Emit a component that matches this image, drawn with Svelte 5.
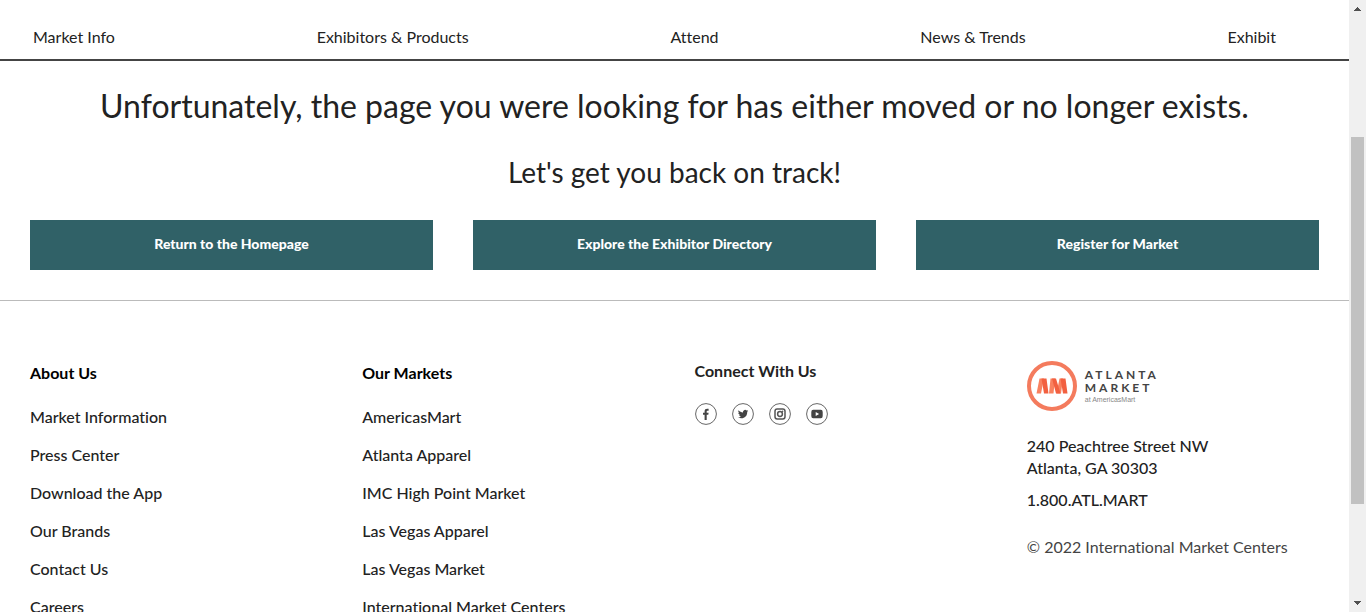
<script>
  const nav = ['Market Info', 'Exhibitors & Products', 'Attend', 'News & Trends', 'Exhibit'];
  const actions = ['Return to the Homepage', 'Explore the Exhibitor Directory', 'Register for Market'];
  const groups = [
    {
      title: 'About Us',
      links: ['Market Information', 'Press Center', 'Download the App', 'Our Brands', 'Contact Us', 'Careers']
    },
    {
      title: 'Our Markets',
      links: ['AmericasMart', 'Atlanta Apparel', 'IMC High Point Market', 'Las Vegas Apparel', 'Las Vegas Market', 'International Market Centers']
    }
  ];
</script>

<div class="window">
  <div class="page">
    <header>
      <nav>
        {#each nav as item}
          <a href="#top">{item}</a>
        {/each}
      </nav>
    </header>

    <main>
      <h1>Unfortunately, the page you were looking for has either moved or no longer exists.</h1>
      <h2>Let's get you back on track!</h2>
      <div class="actions">
        {#each actions as action}
          <a href="#top">{action}</a>
        {/each}
      </div>
    </main>

    <footer>
      {#each groups as group}
        <section class="group">
          <h3>{group.title}</h3>
          <ul>
            {#each group.links as link}
              <li><a href="#top">{link}</a></li>
            {/each}
          </ul>
        </section>
      {/each}

      <section class="connect">
        <h3>Connect With Us</h3>
        <div class="social">
          <a href="#top" aria-label="Facebook">
            <svg viewBox="0 0 22 22"><circle cx="11" cy="11" r="10.4" /><path d="M9.600 17v-5.200H8V9.700h1.600V8.300c0-1.700 1-2.500 2.500-2.500h1.500v1.900h-1c-.7 0-.9.3-.9.9v1.100h1.900l-.3 2.100h-1.600V17z" /></svg>
          </a>
          <a href="#top" aria-label="Twitter">
            <svg viewBox="0 0 22 22"><circle cx="11" cy="11" r="10.4" /><path d="M16.200 7.900c-.4.2-.8.3-1.200.4.4-.3.8-.7.9-1.200-.4.2-.9.4-1.300.5a2.100 2.100 0 0 0-3.600 1.900c-1.800-.1-3.300-.9-4.400-2.200-.6 1-.2 2.200.7 2.800-.4 0-.7-.1-1-.3 0 1 .7 1.900 1.700 2.100-.3.1-.6.1-.9 0 .3.900 1.100 1.500 2 1.500-.9.700-2 1-3.100.9 4.400 2.700 9.400-.2 9.200-5.300.4-.3.700-.7 1-1.100z" /></svg>
          </a>
          <a href="#top" aria-label="Instagram">
            <svg viewBox="0 0 22 22"><circle cx="11" cy="11" r="10.4" /><rect class="line" x="6" y="6" width="10" height="10" rx="2.200" /><circle class="line" cx="11" cy="11" r="2.400" /><circle class="dot" cx="13.700" cy="8.300" r=".7" /></svg>
          </a>
          <a href="#top" aria-label="YouTube">
            <svg viewBox="0 0 22 22"><circle cx="11" cy="11" r="10.4" /><path fill-rule="evenodd" d="M7.200 6.800h7.600q1.900 0 1.900 2.200v4q0 2.200-1.900 2.200H7.200q-1.900 0-1.900-2.200V9q0-2.200 1.900-2.200zM9.700 9v4l3.400-2z" /></svg>
          </a>
        </div>
      </section>

      <section class="contact">
        <a class="logo" href="#top">
          <svg viewBox="0 0 50 50" aria-hidden="true">
            <circle cx="25" cy="25" r="23" fill="none" stroke="#f47b5d" stroke-width="4" />
            <path fill="#f9815f" d="M9.500 32.500 12.500 17.500H17L14 32.500zM22 32.500 23.500 17.500H28L26.500 32.500zM29.500 32.500 32.500 17.500H36L34 32.500z" />
            <path fill="#f26040" d="M14.500 17.500H19.500L21.500 32.500H17zM25 17.500H29L33.500 32.500H29zM33.500 17.500H38.500L40.500 32.500H36z" />
          </svg>
          <span class="wordmark">
            <span>ATLANTA</span>
            <span>MARKET</span>
            <small>at AmericasMart</small>
          </span>
        </a>
        <address>240 Peachtree Street NW<br />Atlanta, GA 30303</address>
        <a class="phone" href="#top">1.800.ATL.MART</a>
        <p>© 2022 International Market Centers</p>
      </section>
    </footer>
  </div>

  <div class="scrollbar" aria-hidden="true">
    <svg viewBox="0 0 17 17"><path d="M5 11h7v-1h-1V9h-1V8H9V7H8v1H7v1H6v1H5z" /></svg>
    <div class="track"><div class="thumb"></div></div>
    <svg viewBox="0 0 17 17"><path d="M5 6h7v1h-1v1h-1v1H9v1H8V9H7V8H6V7H5z" /></svg>
  </div>
</div>

<style>
  :global(body) {
    margin: 0;
    background: #fff;
  }
  .window {
    display: grid;
    grid-template-columns: minmax(0, 1fr) 17px;
    height: 100vh;
    overflow: hidden;
    font-family: Lato, 'Open Sans', sans-serif;
    font-size: 16px;
    font-variant-ligatures: none;
    line-height: 22px;
    color: #222;
  }
  .page {
    height: 100vh;
    overflow: hidden;
  }
  a {
    color: inherit;
    text-decoration: none;
  }
  h1, h2, h3, ul, p {
    margin: 0;
    padding: 0;
  }
  header {
    border-bottom: 2px solid #444;
  }
  nav {
    display: flex;
    justify-content: space-between;
    padding: 26px 73px 11px 33px;
  }
  main {
    padding: 23px 30px 30px;
    text-align: center;
    border-bottom: 1px solid #bbb;
  }
  h1, h2 {
    font-weight: 400;
  }
  h1 {
    font-size: 32px;
    line-height: 44px;
  }
  h2 {
    margin-top: 26px;
    font-size: 28px;
    line-height: 36px;
  }
  .actions {
    display: grid;
    grid-template-columns: repeat(3, 1fr);
    gap: 40px;
    margin-top: 30px;
  }
  .actions a {
    padding: 13px 14px 15px;
    background: #306167;
    color: #fff;
    font-size: 14px;
    font-weight: 900;
  }
  footer {
    display: grid;
    grid-template-columns: repeat(4, minmax(0, 1fr));
    gap: 40px;
    padding: 59px 30px;
  }
  h3 {
    font-size: 16px;
    line-height: 22px;
    font-weight: 700;
  }
  .group h3 {
    padding-top: 2px;
    color: #000;
  }
  ul {
    display: grid;
    gap: 16px;
    margin-top: 22px;
    list-style: none;
    font-weight: 500;
  }
  .social {
    display: flex;
    gap: 15px;
    margin-top: 21px;
  }
  .social svg {
    display: block;
    width: 22px;
    height: 22px;
    fill: #444;
  }
  .social circle, .social .line {
    fill: none;
    stroke: #666;
    stroke-width: 1;
  }
  .social .line {
    stroke: #555;
    stroke-width: 1.5;
  }
  .social .dot {
    fill: #444;
    stroke: none;
  }
  .logo {
    display: flex;
    gap: 8px;
    padding-top: 1px;
  }
  .logo svg {
    width: 50px;
    height: 50px;
  }
  .wordmark {
    display: grid;
    align-content: start;
    padding-top: 7px;
    font-size: 12px;
    line-height: 13px;
    letter-spacing: 3px;
    color: #444;
    font-weight: 700;
  }
  .wordmark small {
    font: 7px/12px 'Liberation Sans', Arial, sans-serif;
    letter-spacing: 0;
    color: #888;
  }
  address {
    margin-top: 24px;
    font-style: normal;
    font-weight: 500;
  }
  .phone {
    display: block;
    margin-top: 10px;
    font-weight: 500;
  }
  .contact p {
    margin-top: 25px;
    color: #444;
  }
  .scrollbar {
    display: flex;
    flex-direction: column;
    background: #f0f0f0;
  }
  .scrollbar svg {
    width: 17px;
    height: 17px;
    fill: #505050;
  }
  .track {
    display: grid;
    flex: 1;
    grid-template-rows: 120fr 367fr 91fr;
    padding: 0 2px;
  }
  .thumb {
    grid-row: 2;
    background: #c1c1c1;
  }
</style>
